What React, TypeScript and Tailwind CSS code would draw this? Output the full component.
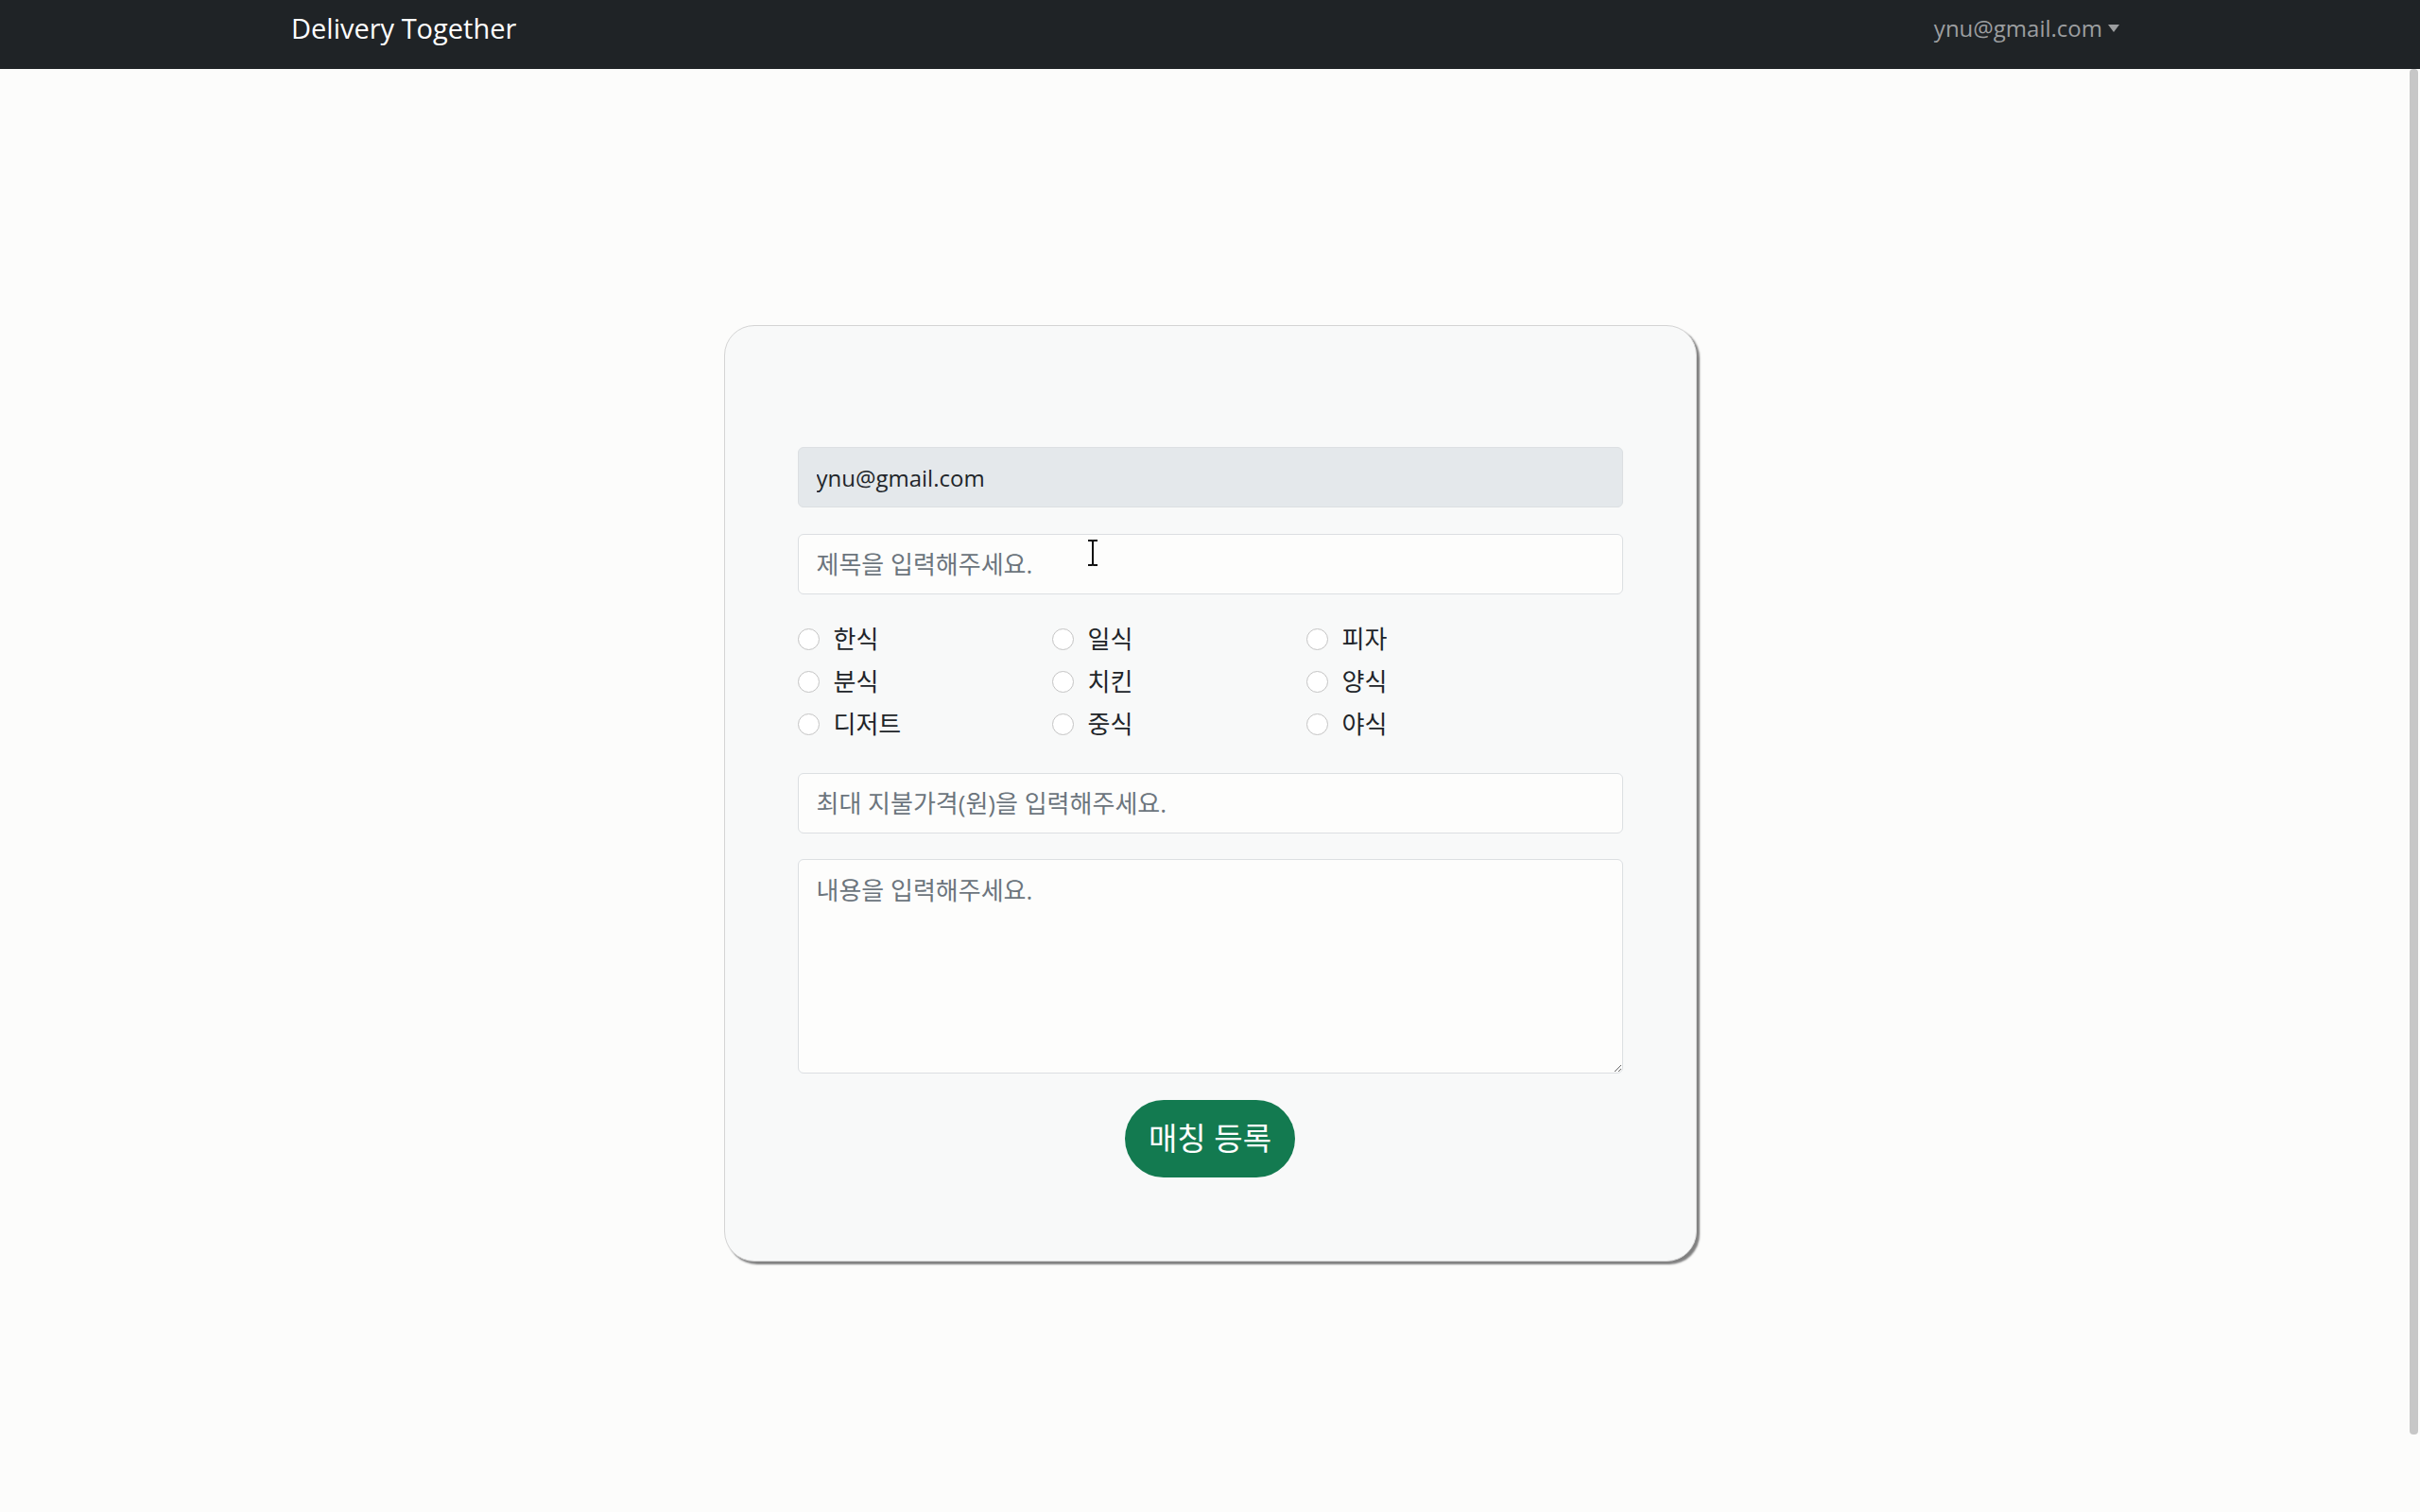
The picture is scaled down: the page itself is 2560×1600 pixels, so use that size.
import React from "react";

const FONT = { fontFamily: '"Open Sans", "Noto Sans CJK KR", sans-serif' };

const foods = ["한식", "일식", "피자", "분식", "치킨", "양식", "디저트", "중식", "야식"];

const fieldCls =
  "block w-full h-[64px] rounded-[6px] border border-[#dcdfe2] px-[19px] text-[#212529] placeholder:text-[#6c757d] outline-none";

const App = () => {
  return (
    <div className="relative min-h-screen w-full bg-[#fcfcfb]" style={FONT}>
      {/* Navbar */}
      <nav className="h-[73px] bg-[#1f2326]">
        <div className="h-full flex items-center justify-between pl-[308px] pr-[318px] pb-[14px]">
          <a href="#" className="text-[29px] text-white">
            Delivery Together
          </a>
          <button className="flex items-center text-[24px] text-[#9c9ea0]">
            ynu@gmail.com
            <span className="ml-[6px] mt-[1px] w-0 h-0 border-x-[6px] border-x-transparent border-t-[8px] border-t-[#9c9ea0]" />
          </button>
        </div>
      </nav>

      {/* Form card */}
      <main className="pt-[271px] pb-[200px]">
        <form className="mx-auto w-[1029px] rounded-[32px] border border-[#d4d4d4] bg-[#f8f9f9] px-[77px] pt-[128px] pb-[88px] shadow-[3px_3px_2px_#808080]">
          <input className={`${fieldCls} bg-[#e4e8eb] text-[24px]`} value="ynu@gmail.com" disabled readOnly />
          <div className="relative mt-[28px]">
            <input className={`${fieldCls} bg-[#fdfdfc] text-[26px]`} placeholder="제목을 입력해주세요." />
            {/* text cursor */}
            <svg className="absolute left-[305px] top-[6px]" width="14" height="28" viewBox="0 0 14 28">
              <path d="M2 1h4l1 1 1-1h4M7 2v24M2 27h4l1-1 1 1h4" stroke="#111" strokeWidth="2" fill="none" />
            </svg>
          </div>

          <div className="mt-[25px] grid grid-cols-[269px_269px_269px]">
            {foods.map((f) => (
              <label key={f} className="h-[45px] flex items-center gap-[15px] text-[26px] text-[#212529]">
                <input
                  type="radio"
                  name="category"
                  className="appearance-none w-[23px] h-[23px] rounded-full border border-[#c4c4c4] bg-white"
                />
                {f}
              </label>
            ))}
          </div>

          <input className={`${fieldCls} bg-[#fdfdfc] text-[26px] mt-[29px]`} placeholder="최대 지불가격(원)을 입력해주세요." />
          <textarea
            className="mt-[27px] block w-full h-[227px] rounded-[6px] border border-[#dcdfe2] bg-[#fdfdfc] px-[19px] pt-[13px] text-[26px] text-[#212529] placeholder:text-[#6c757d] outline-none"
            placeholder="내용을 입력해주세요."
          />

          <div className="mt-[28px] flex justify-center">
            <button type="button" className="w-[180px] h-[82px] rounded-full bg-[#137a50] text-[33px] text-white">
              매칭 등록
            </button>
          </div>
        </form>
      </main>

      {/* overlay scrollbar */}
      <div className="absolute right-[2px] top-[73px] w-[9px] h-[1445px] rounded-[4px] bg-[#c7c7c7]" />
    </div>
  );
};

export default App;
